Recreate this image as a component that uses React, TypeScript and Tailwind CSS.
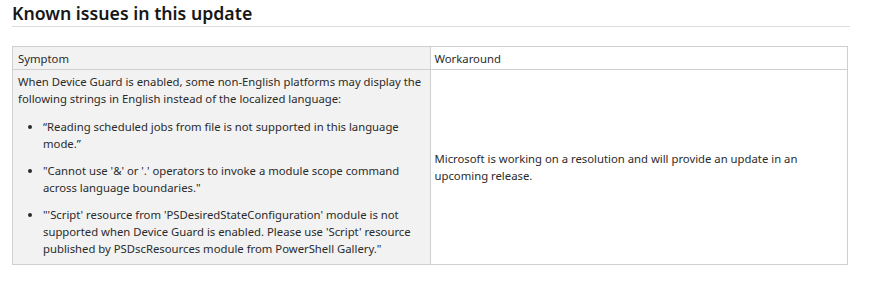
export default function App() {
  return (
    <div className="min-h-[298px] bg-white px-3 pt-[3px] text-[#2b2b2b] [font-family:'Noto_Sans',sans-serif]">
      <h2 className="w-[838px] border-b border-[#dcdcdc] pb-[2px] text-[17.7px] leading-[21px] font-semibold text-[#171717]">
        Known issues in this update
      </h2>

      <table className="mt-[19px] w-[836px] table-fixed border-collapse text-[11.3px] leading-[17px]">
        <thead>
          <tr>
            <th className="h-[23px] border border-[#cfcfcf] bg-[#f2f2f2] px-[5px] text-left font-normal">
              Symptom
            </th>
            <th className="h-[23px] border border-[#cfcfcf] bg-white px-[4px] text-left font-normal">
              Workaround
            </th>
          </tr>
        </thead>
        <tbody>
          <tr>
            <td className="border border-[#cfcfcf] bg-[#f2f2f2] px-[5px] pt-[3px] pb-[7px] align-top">
              <p>
                When Device Guard is enabled, some non-English platforms may display the
                following strings in English instead of the localized language:
              </p>
              <ul className="mt-[11px] list-disc pl-[25px]">
                <li>“Reading scheduled jobs from file is not supported in this language mode.”</li>
                <li className="mt-[10px]">
                  "Cannot use '&amp;' or '.' operators to invoke a module scope command across
                  language boundaries."
                </li>
                <li className="mt-[10px]">
                  "'Script' resource from 'PSDesiredStateConfiguration' module is not supported
                  when Device Guard is enabled. Please use 'Script' resource published by
                  PSDscResources module from PowerShell Gallery."
                </li>
              </ul>
            </td>
            <td className="border border-[#cfcfcf] bg-white px-[4px] align-middle">
              Microsoft is working on a resolution and will provide an update in an upcoming
              release.
            </td>
          </tr>
        </tbody>
      </table>
    </div>
  );
}
